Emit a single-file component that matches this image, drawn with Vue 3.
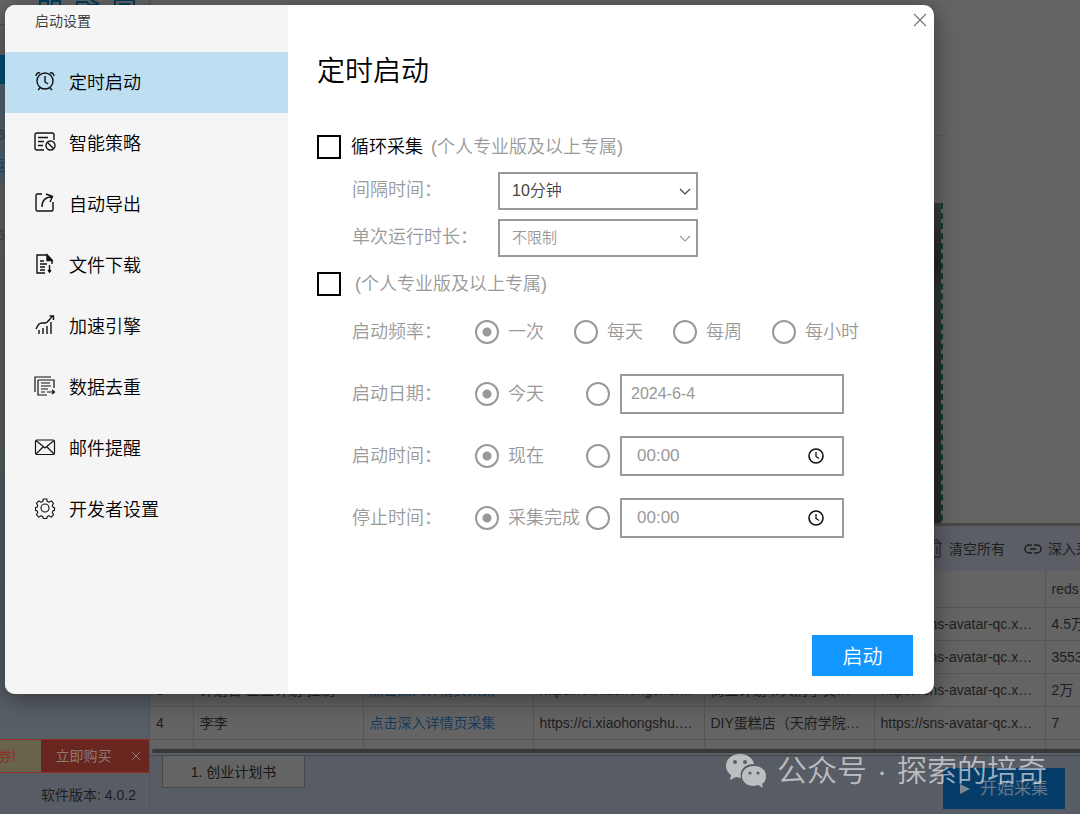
<script setup>
import { ref } from 'vue'

const menu = [
  { id: 'timer', text: '定时启动' },
  { id: 'policy', text: '智能策略' },
  { id: 'export', text: '自动导出' },
  { id: 'download', text: '文件下载' },
  { id: 'boost', text: '加速引擎' },
  { id: 'dedupe', text: '数据去重' },
  { id: 'mail', text: '邮件提醒' },
  { id: 'developer', text: '开发者设置' },
]
const active = ref('timer')

const loop = ref(false)
const schedule = ref(false)
const interval = ref('10分钟')
const duration = ref('不限制')
const frequency = ref('一次')
const frequencies = ['一次', '每天', '每周', '每小时']

const whenRows = ref([
  { id: 'date', label: '启动日期：', preset: '今天', choice: 'preset', value: '2024-6-4', clock: false },
  { id: 'start', label: '启动时间：', preset: '现在', choice: 'preset', value: '00:00', clock: true },
  { id: 'stop', label: '停止时间：', preset: '采集完成', choice: 'preset', value: '00:00', clock: true },
])

const link = '点击深入详情页采集'
const page = 'https://ci.xiaohongshu.…'
const avatar = 'https://sns-avatar-qc.x…'
const rows = [
  { n: 1, name: '创业计划', desc: '创业计划书模板分享…', likes: '4.5万' },
  { n: 2, name: '商业计划', desc: '商业计划书怎么写…', likes: '3553' },
  { n: 3, name: '计划省·企业计划·控制', desc: '商业计划书天府学员…', likes: '2万' },
  { n: 4, name: '李李', desc: 'DIY蛋糕店（天府学院…', likes: '7' },
]
</script>

<template>
  <div class="screen">
    <aside class="side">
      <div class="side-top">
        <div class="tools">
          <svg viewBox="0 0 100 8" width="100" height="8">
            <path d="M1 8V1h8v7M13 8V1h8v7M38 8V2h10l2 3h8V2M52 0l8 4M76 8V0h19v8M80 4h11" fill="none" stroke="#003f64" stroke-width="2" />
          </svg>
        </div>
        <div class="side-head"></div>
        <div class="side-bar"></div>
        <div class="side-list">
          <span class="stub">6</span>
          <span class="stub blue">运</span>
        </div>
        <span class="stub last">6</span>
      </div>
      <div class="promo">
        <span class="coupon">券!</span>
        <button class="buy" type="button">立即购买</button>
        <button class="promo-close" type="button" aria-label="关闭优惠">
          <svg viewBox="0 0 10 10" width="10" height="10"><path d="M1 1l8 8M9 1l-8 8" fill="none" stroke="currentColor" /></svg>
        </button>
      </div>
      <p class="version">软件版本: 4.0.2</p>
    </aside>

    <main class="work">
      <div class="preview">
        <div class="rule"></div>
        <div class="picture"></div>
      </div>

      <div class="toolbar">
        <button type="button" class="tool">
          <svg viewBox="0 0 16 20" width="16" height="20"><path d="M1 4h14M5 4V1h6v3M3 4v14h10V4M6 7v8M10 7v8" fill="none" stroke="currentColor" /></svg>
          清空所有
        </button>
        <button type="button" class="tool">
          <svg viewBox="0 0 18 12" width="18" height="12"><path d="M8 2H5a4 4 0 0 0 0 8h3M10 2h3a4 4 0 0 1 0 8h-3M6 6h6" fill="none" stroke="currentColor" stroke-width="1.500" /></svg>
          深入采集
        </button>
      </div>

      <div class="sheet">
        <table>
          <colgroup>
            <col class="c-no"><col class="c-data"><col class="c-data"><col class="c-wide"><col class="c-data"><col class="c-wide"><col class="c-wide">
          </colgroup>
          <thead>
            <tr><th></th><th>标题</th><th>详情</th><th>链接</th><th>描述</th><th></th><th>reds</th></tr>
          </thead>
          <tbody>
            <tr v-for="r in rows" :key="r.n">
              <td>{{ r.n }}</td>
              <td>{{ r.name }}</td>
              <td><a href="#">{{ link }}</a></td>
              <td>{{ page }}</td>
              <td>{{ r.desc }}</td>
              <td>{{ avatar }}</td>
              <td>{{ r.likes }}</td>
            </tr>
            <tr><td v-for="i in 7" :key="i"></td></tr>
          </tbody>
        </table>
      </div>
      <div class="scroll"><div class="thumb"></div></div>

      <footer class="foot">
        <button type="button" class="tab">1. 创业计划书</button>
        <button type="button" class="collect">
          <svg viewBox="0 0 10 12" width="10" height="12"><path d="M0 1l10 5-10 5z" fill="currentColor" /></svg>
          开始采集
        </button>
      </footer>
    </main>

    <div class="overlay">
      <section class="dialog" role="dialog" aria-labelledby="dialog-name">
        <nav class="menu">
          <h2 id="dialog-name">启动设置</h2>
          <button v-for="m in menu" :key="m.id" type="button" class="item" :class="{ on: active === m.id }" @click="active = m.id">
            <svg class="icon" viewBox="0 0 22 22" width="22" height="22" fill="none" stroke="#111" stroke-width="1.4">
              <g v-if="m.id === 'timer'">
                <circle cx="11" cy="11" r="8" /><path d="M11 6v6l3 2M6 18l-2 2M16 18l2 2M2 6c0-2 2-4 4-3M20 6c0-2-2-4-4-3" />
              </g>
              <g v-else-if="m.id === 'policy'">
                <path d="M10 19H3a2 2 0 0 1-2-2V4a2 2 0 0 1 2-2h15a2 2 0 0 1 2 2v5M4 6.500h10M4 10.500h6M4 14.500h5" /><circle cx="16.500" cy="14.500" r="4.500" /><path d="M13.300 11.300l6.400 6.400" />
              </g>
              <g v-else-if="m.id === 'export'">
                <path d="M8 2H3.500a1.500 1.500 0 0 0-1.500 1.500v14A1.500 1.500 0 0 0 3.500 19h14a1.500 1.500 0 0 0 1.500-1.500V10M8 15c0-6 3-10 10-10M12 2l6.500 2.500L16 10" />
              </g>
              <g v-else-if="m.id === 'download'">
                <path d="M11 20H3V2h10l5 5v4M6 8h4M6 11h7M6 14h5M6 17h5M15.500 12v7M14 17l1.500 2 1.500-2" /><path d="M13 2l5 5.500h-5z" fill="#111" />
              </g>
              <g v-else-if="m.id === 'boost'">
                <path d="M2 15c2-4 3-6 6-6h3c3 0 4-4 8-7M15.500 2h4v4M5 20v-4M9 20v-6M13 20v-8M17 20V8" />
              </g>
              <g v-else-if="m.id === 'dedupe'" stroke-width="1.200">
                <path d="M1 17V2h16M4 5h16v8M4 5v15h9M7 8h9M7 11h10M7 14h7M7 17h4M13 17h7M18 15l2.500 2-2.500 2" />
              </g>
              <g v-else-if="m.id === 'mail'" stroke-width="1.200">
                <rect x="1.500" y="4" width="19" height="14.500" rx="1.500" /><path d="M2 4.500l9 7.500 9-7.500M2 18l7-7M20 18l-7-7" />
              </g>
              <g v-else stroke-width="1.100">
                <circle cx="11" cy="11" r="4" />
                <path d="M9.300 2h3.400l.6 2.500 1.700.7 2.200-1.300 2.400 2.400-1.300 2.200.7 1.700 1.500.4v2.800l-1.500.4-.7 1.700 1.300 2.200-2.400 2.400-2.200-1.300-1.700.7-.6 2h-3.400l-.6-2-1.700-.7-2.200 1.300-2.400-2.400 1.300-2.200-.7-1.700-1.500-.4v-2.800l1.500-.4.7-1.700-1.300-2.200 2.400-2.400L7 5.200l1.700-.7z" stroke-linejoin="round" />
              </g>
            </svg>
            {{ m.text }}
          </button>
        </nav>

        <form class="panel" @submit.prevent>
          <button type="button" class="close" aria-label="关闭">
            <svg viewBox="0 0 14 14" width="14" height="14"><path d="M1 1l12 12M13 1L1 13" fill="none" stroke="currentColor" stroke-width="1.200" /></svg>
          </button>
          <h1>定时启动</h1>

          <div class="check">
            <input id="loop" v-model="loop" type="checkbox">
            <label for="loop"><b>循环采集</b><span>(个人专业版及以上专属)</span></label>
          </div>

          <div class="pick">
            <label for="interval">间隔时间：</label>
            <div class="select strong">
              <select id="interval" v-model="interval"><option>10分钟</option><option>30分钟</option></select>
              <svg viewBox="0 0 12 8" width="12" height="8"><path d="M1 1l5 5 5-5" fill="none" stroke="currentColor" stroke-width="1.200" /></svg>
            </div>
          </div>
          <div class="pick">
            <label for="duration">单次运行时长：</label>
            <div class="select">
              <select id="duration" v-model="duration"><option>不限制</option><option>1小时</option></select>
              <svg viewBox="0 0 12 8" width="12" height="8"><path d="M1 1l5 5 5-5" fill="none" stroke="currentColor" stroke-width="1.200" /></svg>
            </div>
          </div>

          <div class="check second">
            <input id="schedule" v-model="schedule" type="checkbox">
            <label for="schedule"><span>(个人专业版及以上专属)</span></label>
          </div>

          <div class="rows">
            <div class="row" role="radiogroup" aria-label="启动频率">
              <span class="name">启动频率：</span>
              <label v-for="f in frequencies" :key="f" class="option">
                <input v-model="frequency" type="radio" name="frequency" :value="f">{{ f }}
              </label>
            </div>
            <div v-for="w in whenRows" :key="w.id" class="row" role="radiogroup" :aria-label="w.label">
              <span class="name">{{ w.label }}</span>
              <label class="option preset">
                <input v-model="w.choice" type="radio" :name="w.id" value="preset">{{ w.preset }}
              </label>
              <input v-model="w.choice" type="radio" :name="w.id" value="custom" :aria-label="w.label + '自定义'">
              <div class="field" :class="{ time: w.clock }">
                <input v-model="w.value" type="text" :aria-label="w.label">
                <svg v-if="w.clock" viewBox="0 0 16 16" width="16" height="16" fill="none" stroke="#111"><circle cx="8" cy="8" r="7" stroke-width="1.600" /><path d="M8 4v4.500l3 2" stroke-width="1.300" /></svg>
              </div>
            </div>
          </div>

          <button type="submit" class="go">启动</button>
        </form>
      </section>
    </div>

    <div class="mark">
      <svg viewBox="0 0 42 36" width="42" height="36">
        <path d="M15 1C7 1 1 6 1 13c0 4 2 7 5 9l-1 5 6-3 5 1c-2-8 4-14 13-14C28 5 22 1 15 1z" fill="currentColor" />
        <path d="M29 13c-7 0-12 4-12 10s5 10 12 10l4-1 5 3-1-4c3-2 4-4 4-8 0-6-5-10-12-10z" fill="currentColor" />
        <g fill="#5a5e64"><circle cx="10" cy="9" r="2" /><circle cx="20" cy="9" r="2" /><circle cx="25" cy="20" r="1.600" /><circle cx="33" cy="20" r="1.600" /></g>
      </svg>
      <span>公众号</span><span>·</span><span>探索的培奇</span>
    </div>
  </div>
</template>

<style>
body { margin: 0; }
</style>

<style scoped>
* { box-sizing: border-box; }
button, input, select { font: inherit; color: inherit; margin: 0; padding: 0; border: 0; background: none; border-radius: 0; }
h1, h2, p { margin: 0; font-weight: inherit; }
svg { display: block; flex: none; }

.screen {
  position: relative;
  display: flex;
  height: 100vh;
  overflow: hidden;
  background: #656565;
  color: #1e1e1e;
  font: 14px/20px "Liberation Sans", "Noto Sans CJK SC", sans-serif;
}

/* Main window */
.side { display: flex; flex-direction: column; flex: none; width: 149px; background: #585c64; }
.side-top { flex: 1; background: linear-gradient(#646668 0 185px, #616365 260px, #555e64 600px, #585e65); }
.tools { height: 25px; padding-left: 39px; border-bottom: 1px solid #555; }
.side-head { height: 30px; }
.side-bar { height: 29px; background: #005078; }
.side-list { height: 100px; padding-top: 41px; background: #536672; }
.stub { display: flex; justify-content: flex-end; width: 5px; height: 30px; color: #3f464a; }
.stub.blue { color: #1d4d80; }
.stub.last { padding-top: 41px; height: 61px; }
.promo { display: flex; height: 34px; border-bottom: 1px solid #8c3124; border-top: 1px solid #8c3124; background: #68261e; }
.coupon { flex: none; width: 41px; padding-right: 25px; display: flex; justify-content: flex-end; align-items: center; background: #68634a; color: #8c3124; white-space: nowrap; }
.buy { flex: none; width: 85px; color: #8f7b78; }
.promo-close { display: flex; align-items: center; padding-left: 5px; color: #8f7b78; }
.version { padding: 12px 0 9px 41px; font-size: 14px; white-space: nowrap; }

.work { display: flex; flex: 1; flex-direction: column; min-width: 0; overflow: hidden; border-left: 1px solid #50555a; }
.preview { flex: 1; min-height: 0; padding-top: 135px; overflow: hidden; }
.rule { height: 1px; background: #5c5c5c; margin-right: 132px; }
.picture { height: 388px; margin: 67px 137px 0 0; border-right: 2px dashed #07441f; background: linear-gradient(#3e3e3e, #252525 60px, #303438 90px, #292929 180px) padding-box; }
.toolbar { display: flex; flex: none; gap: 19px; height: 48px; padding-left: calc(100% - 153px); border-top: 3px solid #474747; background: #5b5e65; }
.tool { display: flex; align-items: center; flex: none; gap: 6px; }

.sheet { flex: none; overflow: hidden; }
table { width: 1066px; table-layout: fixed; border-collapse: collapse; background: #646464; }
.c-no { width: 43px; }
.c-data { width: 170px; }
.c-wide { width: 171px; }
tr { height: 33px; }
thead tr { height: 36px; }
tbody tr:last-child { height: 9px; }
th, td { overflow: hidden; padding: 0 6px; border: solid #565656; border-width: 0 1px 1px 0; font-weight: 400; text-align: left; white-space: nowrap; }
tbody tr:last-child td { border-bottom: 0; }
td a { color: #173b5a; text-decoration: none; }
.scroll { flex: none; height: 8px; padding: 1px 0 2px 2px; background: #596066; border-bottom: 1px solid #414549; }
.thumb { height: 4px; border-radius: 2px 0 0 2px; background: #383838; }
.foot { display: flex; flex: none; align-items: flex-start; justify-content: space-between; height: 58px; padding-left: 12px; padding-right: 15px; background: #585c64; }
.tab { width: 143px; height: 32px; border: 1px solid #484848; border-top: 0; background: #646464; color: #151515; }
.collect { display: flex; align-items: center; justify-content: center; gap: 10px; width: 122px; height: 41px; margin-top: 12px; background: #053c68; color: #66788a; font-size: 17px; }
.collect svg { color: #7c8892; }

/* Dialog */
.overlay { position: absolute; inset: 0; display: flex; padding: 5px 146px 120px 5px; }
.dialog { display: flex; flex: 1; min-width: 0; overflow: hidden; border-radius: 10px; background: #fff; box-shadow: 0 4px 24px rgba(0, 0, 0, .45); font-weight: 350; font-size: 18px; line-height: 26px; color: #999; }
.menu { display: flex; flex: none; flex-direction: column; width: 283px; background: #f5f5f5; color: #000; }
.menu h2 { height: 47px; padding: 3px 30px 0; color: #333; font-size: 14px; }
.item { display: flex; align-items: center; gap: 13px; height: 61px; padding-left: 29px; text-align: left; }
.item.on { background: #bedff2; }
.icon { margin-bottom: 4px; }

.panel { display: flex; flex: 1; flex-direction: column; min-width: 0; padding: 8px 21px 18px 29px; }
.close { display: flex; align-self: flex-end; margin-right: -14px; color: #777; }
h1 { margin-top: 25px; color: #000; font-size: 28px; line-height: 40px; }
.check { display: flex; align-items: center; gap: 10px; height: 26px; margin: 42px 0 12px; }
.check.second label { margin-left: 4px; }
.check input { flex: none; width: 24px; height: 24px; border: 2px solid #000; appearance: none; }
.check input:checked { background: #000; }
.check label { display: flex; gap: 8px; white-space: nowrap; }
.check b { color: #000; font-weight: inherit; }
.pick { display: flex; height: 38px; margin-bottom: 9px; padding-left: 35px; }
.pick > label { width: 146px; padding-top: 5px; white-space: nowrap; }
.pick + .check { margin: 5px 0 15px; }
.select { position: relative; width: 200px; border: 2px solid #999; font-size: 15px; }
.select.strong { color: #444; font-size: 16px; }
.select select { width: 100%; height: 100%; padding: 0 28px 0 12px; appearance: none; }
.select svg { position: absolute; top: 14px; right: 5px; pointer-events: none; }

.rows { display: flex; flex-direction: column; gap: 22px; padding-left: 35px; }
.row { display: flex; align-items: center; height: 40px; }
.name { flex: none; width: 123px; white-space: nowrap; }
.option { display: flex; flex: none; align-items: center; gap: 9px; width: 99px; white-space: nowrap; }
.option.preset { width: 111px; }
.row input[type="radio"] { flex: none; width: 24px; height: 24px; border: 2px solid #999; border-radius: 50%; appearance: none; }
.row input[type="radio"]:checked { background: radial-gradient(circle, #999 4px, transparent 5px); }
.field { display: flex; align-items: center; width: 224px; height: 40px; margin-left: 10px; padding: 0 18px 0 9px; border: 2px solid #999; font-size: 16px; }
.field.time { padding-left: 15px; font-size: 17px; }
.field input { flex: 1; width: 100%; min-width: 0; }
.go { align-self: flex-end; width: 101px; height: 41px; margin-top: auto; padding-top: 2px; background: #1296ff; color: #fff; font-size: 20px; }

/* Account watermark */
.mark { position: absolute; right: 33px; bottom: 23px; display: flex; align-items: center; gap: 10px; color: rgba(255, 255, 255, .6); font-size: 30px; font-weight: 350; line-height: 40px; white-space: nowrap; pointer-events: none; }
</style>
